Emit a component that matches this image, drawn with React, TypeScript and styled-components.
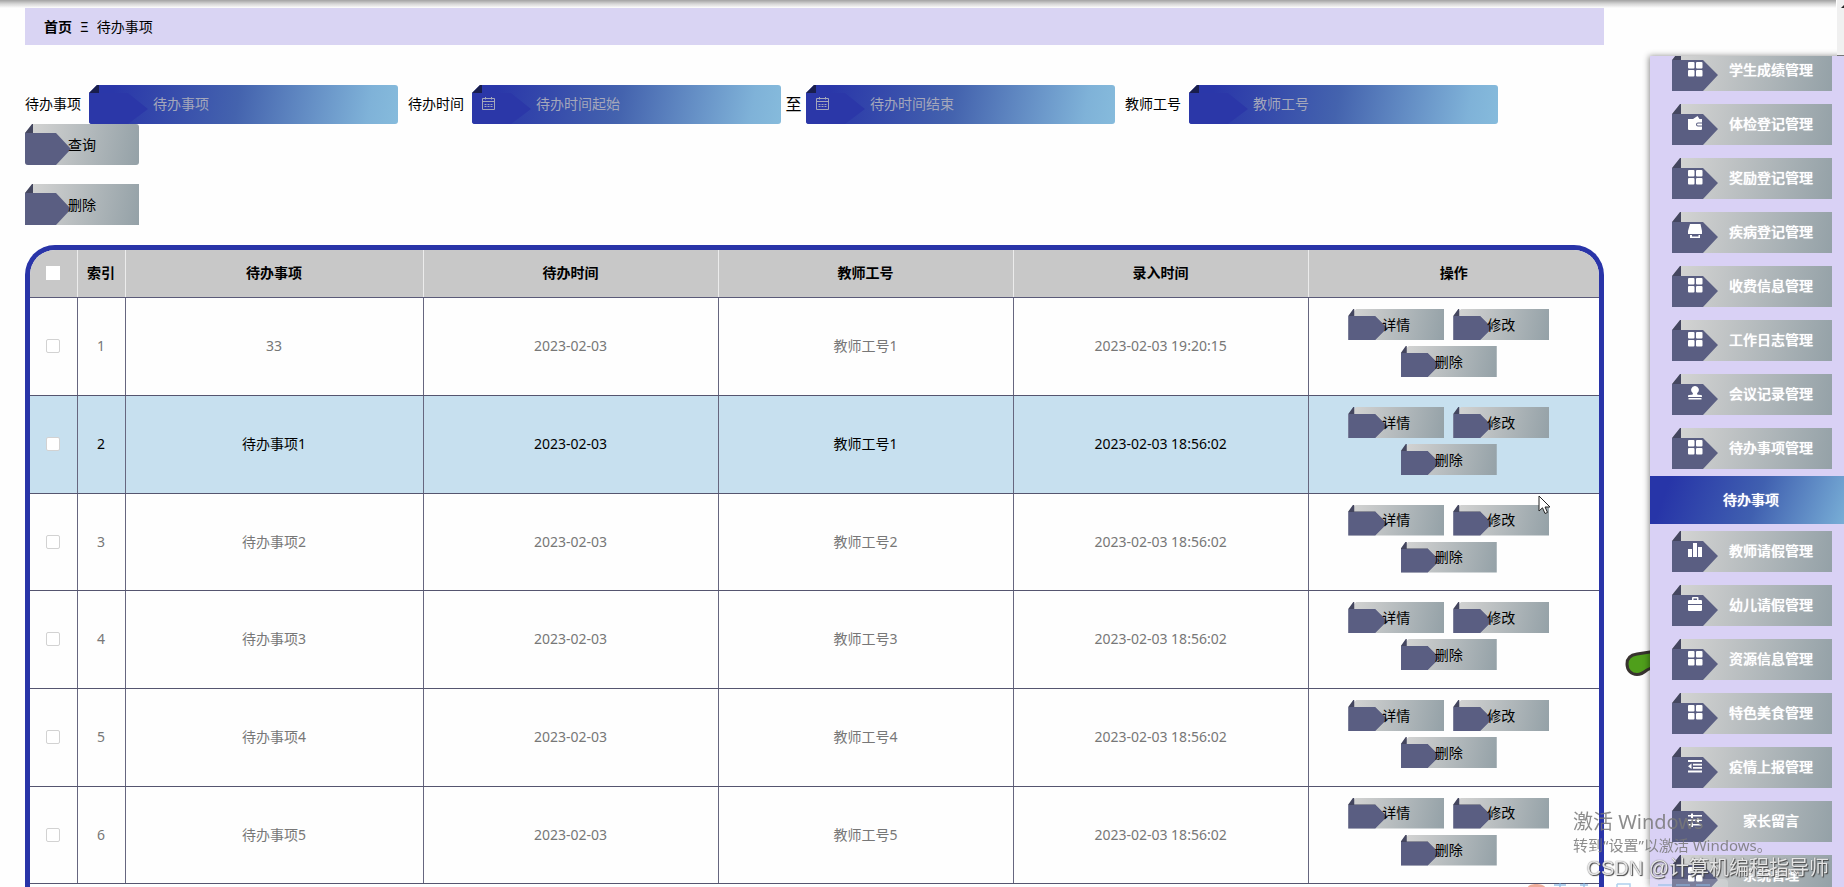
import React from 'react';
import styled, { createGlobalStyle, css } from 'styled-components';

const GlobalStyle = createGlobalStyle`
  *, *::before, *::after { box-sizing: border-box; }
  body {
    margin: 0;
    overflow: hidden;
    background: #fefefe;
    color: #000;
    font: 14px/20px 'Noto Sans', 'Noto Sans CJK SC', sans-serif;
  }
  button, input { font: inherit; }
`;

const Page = styled.div`
  display: grid;
  grid-template-columns: minmax(0, 1fr) 194px;
  column-gap: 46px;
  height: 100vh;
  padding-left: 25px;
  overflow: hidden;
`;

const HeaderShadow = styled.div`
  position: fixed;
  inset: 0 8px auto 0;
  height: 8px;
  background: linear-gradient(#a2a2a2, rgba(190, 190, 190, 0.6) 50%, rgba(255, 255, 255, 0));
`;

const ScrollStub = styled.div`
  position: fixed;
  top: 0;
  right: 0;
  width: 7px;
  height: 56px;
  background: #f0f0f0;
  border-bottom: 1px solid #777;
  overflow: hidden;
  svg { display: block; }
`;

const Main = styled.main`
  display: flex;
  flex-direction: column;
  min-width: 0;
  padding-top: 8px;
`;

const Breadcrumb = styled.nav`
  display: flex;
  align-items: center;
  gap: 8px;
  height: 37px;
  padding: 0 19px;
  background: #d9d4f3;
  a { color: inherit; font-weight: 700; text-decoration: none; }
`;

const SearchForm = styled.form`
  display: flex;
  flex-wrap: wrap;
  align-items: center;
  margin-top: 40px;
`;

const Field = styled.div`
  display: flex;
  align-items: center;
  margin-right: 10px;
  label { width: 64px; padding-bottom: 2px; white-space: nowrap; }
`;

const Until = styled.span`
  width: 25px;
  padding-bottom: 2px;
  text-align: center;
  font-size: 16px;
`;

const InputShell = styled.span`
  position: relative;
  isolation: isolate;
  display: block;
  width: 309px;
  height: 39px;
  border-radius: 3px;
  overflow: hidden;
  &::before {
    content: '';
    position: absolute;
    inset: 0;
    z-index: -2;
    background: linear-gradient(100deg, #2a37a9 8%, #4463ae 48%, #7fb2d8 90%, #86bbdc);
    clip-path: polygon(0 8px, 8px 0, 100% 0, 100% 100%, 0 100%);
  }
  &::after {
    content: '';
    position: absolute;
    inset: 0;
    z-index: -1;
    background: linear-gradient(#191e4d 8px, #2b37a8 8px);
    clip-path: polygon(0 8px, 8px 0, 10px 0, 10px 8px, 39px 8px, 59px 24px, 39px 100%, 0 100%);
  }
  svg { position: absolute; left: 10px; top: 12px; }
`;

const TextInput = styled.input`
  display: block;
  width: 100%;
  height: 100%;
  padding: 0 12px 2px 64px;
  border: 0;
  outline: 0;
  background: transparent;
  color: #fff;
  &::placeholder { color: #a4a7bb; opacity: 1; }
`;

const tag = css<{ $fold: number; $shoulder: number; $tip: number }>`
  position: relative;
  isolation: isolate;
  overflow: hidden;
  &::before {
    content: '';
    position: absolute;
    inset: 0;
    z-index: -2;
    background: linear-gradient(100deg, #d6d6d5, #c3c6c7 30%, #94a1a7);
    clip-path: polygon(0 ${p => p.$fold}px, 8px 0, 100% 0, 100% 100%, 0 100%);
  }
  &::after {
    content: '';
    position: absolute;
    inset: 0;
    z-index: -1;
    background: linear-gradient(#44465f ${p => p.$fold}px, #5a5e82 ${p => p.$fold}px);
    clip-path: polygon(
      0 ${p => p.$fold}px, ${p => p.$fold - 2}px 0, ${p => p.$fold - 1}px 0, ${p => p.$fold - 1}px ${p => p.$fold}px,
      ${p => p.$shoulder}px ${p => p.$fold}px, ${p => p.$tip}px 61%, ${p => p.$shoulder}px 100%, 0 100%
    );
  }
`;

const ActionButton = styled.button.attrs<{ $small?: boolean; $rounded?: boolean }>(p => ({
  $fold: p.$small ? 7 : 9,
  $shoulder: p.$small ? 27 : 31,
  $tip: p.$small ? 39 : 46,
}))<{ $small?: boolean; $rounded?: boolean; $fold?: number; $shoulder?: number; $tip?: number }>`
  ${tag as any}
  width: ${p => (p.$small ? 96 : 114)}px;
  height: ${p => (p.$small ? 31 : 41)}px;
  padding: 0;
  border: 0;
  border-radius: ${p => (p.$rounded ? 3 : 0)}px;
  background: none;
  color: #000;
  cursor: pointer;
`;

const Toolbar = styled.div`
  display: flex;
  padding: 19px 0 20px;
`;

const TableFrame = styled.div`
  flex: 1 0 auto;
  border: 5px solid #2934a8;
  border-bottom: 0;
  border-radius: 30px 30px 0 0;
  overflow: hidden;
`;

const DataTable = styled.table`
  width: 100%;
  table-layout: fixed;
  border-collapse: collapse;
  text-align: center;
`;

const HeadCell = styled.th`
  height: 47px;
  padding: 0;
  background: #c8c8c8;
  border-right: 1px solid #ececec;
  border-bottom: 1px solid #5a5a78;
  &:last-child { border-right: 0; }
`;

const Row = styled.tr<{ $active: boolean }>`
  height: 98px;
  background: ${p => (p.$active ? '#c7e0ef' : 'transparent')};
  color: ${p => (p.$active ? '#000' : '#777')};
  &:nth-child(3n) { height: 97px; }
`;

const Cell = styled.td`
  padding: 0;
  border-right: 1px solid #66667f;
  border-bottom: 1px solid #55556f;
  &:last-child { border-right: 0; }
`;

const Actions = styled.div`
  display: flex;
  flex-wrap: wrap;
  justify-content: center;
  gap: 6px 9px;
  padding: 0 40px 6px 30px;
`;

const Tick = styled.input`
  appearance: none;
  display: block;
  width: 14px;
  height: 14px;
  margin: 0 auto;
  border: 1px solid #d2d2d2;
  border-radius: 2px;
  background: #fff;
  &:checked { background: #2934a8; }
`;

const HeadTick = styled(Tick)`
  border-color: #fff;
  border-radius: 0;
`;

const Sidebar = styled.aside`
  position: relative;
  margin-top: 56px;
  height: calc(100vh - 56px);
  background: #d9d1f5;
  box-shadow: -1px 0 6px rgba(0, 0, 0, 0.45);
`;

const MenuClip = styled.nav`
  height: 100%;
  overflow: hidden;
`;

const MenuList = styled.ul`
  margin: -12px 0 0;
  padding: 0;
  list-style: none;
`;

const MenuItem = styled.li`
  padding: 6px 12px 7px 22px;
`;

const MenuLink = styled.a<{ $fold: number; $shoulder: number; $tip: number }>`
  ${tag}
  display: grid;
  grid-template-columns: 38px 1fr;
  align-items: center;
  height: 41px;
  padding-bottom: 2px;
  color: #fff;
  font-weight: 500;
  text-align: center;
  text-decoration: none;
  text-shadow: 0 0 1px #fff;
  white-space: nowrap;
  svg { margin-left: 16px; }
`;

const SubMenuItem = styled.li`
  padding-bottom: 1px;
  a {
    display: flex;
    align-items: center;
    justify-content: center;
    height: 48px;
    padding: 0 0 0 8px;
    background: linear-gradient(110deg, #2735a8 10%, #4060b0 55%, #78aed6);
    color: #fff;
    font-weight: 500;
    text-decoration: none;
    text-shadow: 0 0 1px #fff;
  }
`;

const Leaf = styled.svg`
  position: absolute;
  left: -26px;
  top: 594px;
  z-index: -1;
`;

const Pointer = styled.svg`
  position: fixed;
  left: 1538px;
  top: 495px;
`;

const DockEdge = styled.svg`
  position: fixed;
  right: 114px;
  bottom: 0;
  pointer-events: none;
`;

const SystemNotice = styled.div`
  position: fixed;
  right: 16px;
  bottom: 32px;
  width: 255px;
  color: rgba(120, 120, 120, 0.85);
  pointer-events: none;
  white-space: nowrap;
  strong { display: block; font-size: 20px; line-height: 26px; font-weight: 400; }
  span { display: block; font-size: 15px; line-height: 20px; }
`;

const Credit = styled.div`
  position: fixed;
  right: 15px;
  bottom: 5px;
  color: rgba(255, 255, 255, 0.85);
  font-family: 'Liberation Sans', 'Noto Sans CJK SC', sans-serif;
  font-size: 20px;
  line-height: 28px;
  text-shadow: 1px 1px 1px #444, 0 0 1px #555;
  white-space: nowrap;
  pointer-events: none;
`;

type IconName = 'grid' | 'wallet' | 'printer' | 'stamp' | 'bars' | 'case' | 'indent' | 'sliders';

const icons: Record<IconName, React.ReactNode> = {
  grid: (
    <>
      <rect x="0" y="0" width="6.5" height="6.5" rx="1" />
      <rect x="8" y="0" width="6.5" height="6.5" rx="1" />
      <rect x="0" y="8" width="6.5" height="6.5" rx="1" />
      <rect x="8" y="8" width="6.5" height="6.5" rx="1" />
    </>
  ),
  wallet: <path d="M0 3h5l4.500-3 2 3H14v3.500h-4a2 2 0 0 0 0 4h4V13a1 1 0 0 1-1 1H1a1 1 0 0 1-1-1zM10 7.500h4v2h-4a1 1 0 0 1 0-2z" />,
  printer: <path d="M2 0h10.500l1.500 7v3H0V7zM2 11h10v3H2zM4 11v1.500h6.500V11z" fillRule="evenodd" />,
  stamp: <path d="M7 0a3.800 3.800 0 0 1 2.500 6.700c-.8.900-.5 1.800 1 2l2.500.4a1 1 0 0 1 1 1V11H0v-.9a1 1 0 0 1 1-1l2.500-.4c1.500-.2 1.800-1.100 1-2A3.800 3.800 0 0 1 7 0zM.5 12h13v1.500H.5z" />,
  bars: <path d="M0 6h4v8H0zM5 0h4v14H5zM10 4h4v10h-4z" />,
  case: <path d="M4 3V1a1 1 0 0 1 1-1h4.500a1 1 0 0 1 1 1v2H13a1 1 0 0 1 1 1v3H0V4a1 1 0 0 1 1-1zm1.500 0H9V1.500H5.500zM0 8h14v5a1 1 0 0 1-1 1H1a1 1 0 0 1-1-1z" fillRule="evenodd" />,
  indent: <path d="M0 1h14v2H0zM5 4.800h9v1.700H5zM5 8h9v1.700H5zM0 11.500h14v2H0zM0 7.200 3.500 4.500v5.500z" />,
  sliders: <path d="M0 2h3V.5h2V2h9v1.500H5V5H3V3.500H0zM0 6.500h9V5h2v1.500h3V8h-3v1.500H9V8H0zM0 11h3V9.500h2V11h9v1.500H5V14H3v-1.500H0z" />,
};

const menuTop: [string, IconName][] = [
  ['学生成绩管理', 'grid'],
  ['体检登记管理', 'wallet'],
  ['奖励登记管理', 'grid'],
  ['疾病登记管理', 'printer'],
  ['收费信息管理', 'grid'],
  ['工作日志管理', 'grid'],
  ['会议记录管理', 'stamp'],
  ['待办事项管理', 'grid'],
];

const menuBottom: [string, IconName][] = [
  ['教师请假管理', 'bars'],
  ['幼儿请假管理', 'case'],
  ['资源信息管理', 'grid'],
  ['特色美食管理', 'grid'],
  ['疫情上报管理', 'indent'],
  ['家长留言', 'sliders'],
  ['系统管理', 'grid'],
];

const rows = [
  ['33', '教师工号1', '2023-02-03 19:20:15'],
  ['待办事项1', '教师工号1', '2023-02-03 18:56:02'],
  ['待办事项2', '教师工号2', '2023-02-03 18:56:02'],
  ['待办事项3', '教师工号3', '2023-02-03 18:56:02'],
  ['待办事项4', '教师工号4', '2023-02-03 18:56:02'],
  ['待办事项5', '教师工号5', '2023-02-03 18:56:02'],
];

function CalendarIcon() {
  return (
    <svg width="13" height="13" viewBox="0 0 13 13" fill="none" stroke="#a4a7bb" aria-hidden="true">
      <path d="M.5 1.500h12v11H.5zM.5 4.500h12M3.500 0v2.500M9.500 0v2.500" />
      <path d="M2.500 7.500h8M2.500 9.500h8" strokeDasharray="2 1" />
    </svg>
  );
}

function SearchField({ id, label, hint, date }: { id: string; label?: string; hint: string; date?: boolean }) {
  return (
    <>
      {label && <label htmlFor={id}>{label}</label>}
      <InputShell>
        {date && <CalendarIcon />}
        <TextInput id={id} placeholder={hint} aria-label={label ? undefined : hint} />
      </InputShell>
    </>
  );
}

function MenuEntry({ label, icon }: { label: string; icon: IconName }) {
  return (
    <MenuItem>
      <MenuLink href="#" $fold={10} $shoulder={31} $tip={46}>
        <svg width="15" height="15" viewBox="0 0 15 15" fill="#fff" aria-hidden="true">{icons[icon]}</svg>
        <span>{label}</span>
      </MenuLink>
    </MenuItem>
  );
}

export default function App() {
  return (
    <>
      <GlobalStyle />
      <Page>
        <Main>
          <Breadcrumb>
            <a href="#">首页</a>
            <span>Ξ</span>
            <span>待办事项</span>
          </Breadcrumb>
          <SearchForm onSubmit={e => e.preventDefault()}>
            <Field><SearchField id="item" label="待办事项" hint="待办事项" /></Field>
            <Field>
              <SearchField id="from" label="待办时间" hint="待办时间起始" date />
              <Until>至</Until>
              <SearchField id="to" hint="待办时间结束" date />
            </Field>
            <Field><SearchField id="teacher" label="教师工号" hint="教师工号" /></Field>
            <ActionButton $rounded>查询</ActionButton>
          </SearchForm>
          <Toolbar><ActionButton type="button">删除</ActionButton></Toolbar>
          <TableFrame>
            <DataTable>
              <colgroup>
                <col style={{ width: 47 }} />
                <col style={{ width: 48 }} />
                <col style={{ width: '19%' }} />
                <col style={{ width: '18.8%' }} />
                <col style={{ width: '18.8%' }} />
                <col style={{ width: '18.8%' }} />
                <col />
              </colgroup>
              <thead>
                <tr>
                  <HeadCell><HeadTick type="checkbox" aria-label="全选" /></HeadCell>
                  {['索引', '待办事项', '待办时间', '教师工号', '录入时间', '操作'].map(h => (
                    <HeadCell key={h}>{h}</HeadCell>
                  ))}
                </tr>
              </thead>
              <tbody>
                {rows.map(([title, teacher, created], i) => (
                  <Row key={title} $active={i === 1}>
                    <Cell><Tick type="checkbox" aria-label={title} /></Cell>
                    <Cell>{i + 1}</Cell>
                    <Cell>{title}</Cell>
                    <Cell>2023-02-03</Cell>
                    <Cell>{teacher}</Cell>
                    <Cell>{created}</Cell>
                    <Cell>
                      <Actions>
                        <ActionButton type="button" $small>详情</ActionButton>
                        <ActionButton type="button" $small>修改</ActionButton>
                        <ActionButton type="button" $small>删除</ActionButton>
                      </Actions>
                    </Cell>
                  </Row>
                ))}
              </tbody>
            </DataTable>
          </TableFrame>
        </Main>
        <Sidebar>
          <Leaf width="40" height="28" viewBox="0 0 40 28" aria-hidden="true">
            <path d="M40 0 26 2 13 4C6 5 3 9 3 14c0 6 4 10.500 10 10.500 4 0 7-2 10-4.500L40 12z" fill="#4f9f1b" stroke="#38332f" strokeWidth="3" />
          </Leaf>
          <MenuClip>
            <MenuList>
              {menuTop.map(([label, icon]) => <MenuEntry key={label} label={label} icon={icon} />)}
              <SubMenuItem><a href="#">待办事项</a></SubMenuItem>
              {menuBottom.map(([label, icon]) => <MenuEntry key={label} label={label} icon={icon} />)}
            </MenuList>
          </MenuClip>
        </Sidebar>
      </Page>
      <HeaderShadow />
      <ScrollStub>
        <svg width="7" height="10" aria-hidden="true"><path d="M4 8 7 5v3z" fill="#222" /></svg>
      </ScrollStub>
      <Pointer width="14" height="20" viewBox="0 0 14 20" aria-hidden="true">
        <path d="M1 1v15l3.500-3.200L7 18.500l2.500-1.100L7 12h5z" fill="#fff" stroke="#222" />
      </Pointer>
      <DockEdge width="202" height="8" viewBox="0 0 202 8" aria-hidden="true">
        <path d="M0 8c1-4 15-4 17 0z" fill="#e8896f" opacity=".7" />
        <path d="M26 6h12M32 4v4M52 6h8M56 4v4M89 5h13v3M89 5v3M130 6h14M148 6h14M168 6h14" fill="none" stroke="#6fa9de" strokeWidth="1.500" opacity=".7" />
        <path d="M80 8V4q0-4 4-4h112q4 0 4 4v4z" fill="#fff" opacity=".2" />
      </DockEdge>
      <SystemNotice>
        <strong>激活 Windows</strong>
        <span>转到“设置”以激活 Windows。</span>
      </SystemNotice>
      <Credit>CSDN @计算机编程指导师</Credit>
    </>
  );
}
